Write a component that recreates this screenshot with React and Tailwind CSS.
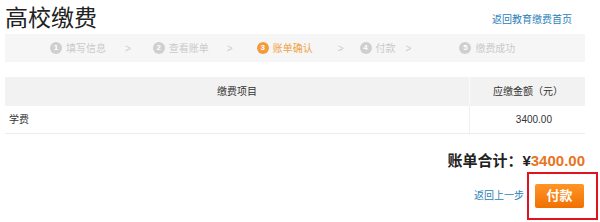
import React from "react";

const font = { fontFamily: '"Liberation Sans", "Noto Sans CJK SC", sans-serif' };

const steps = [
  { n: 1, label: "填写信息", sep: "ml-[19px] mr-[22px]" },
  { n: 2, label: "查看账单", sep: "ml-[18px] mr-[24px]" },
  { n: 3, label: "账单确认", sep: "ml-[25px] mr-[16px]", active: true },
  { n: 4, label: "付款", sep: "ml-[10px] mr-[48px]" },
  { n: 5, label: "缴费成功" },
];

function Step({ step }) {
  const color = step.active ? "text-[#f0a444]" : "text-[#cacaca]";
  const dot = step.active ? "bg-[#f39b3c]" : "bg-[#cfcfcf]";
  return (
    <div className={`flex items-center gap-[4px] text-[10px] ${color}`}>
      <span
        className={`flex h-[12px] w-[12px] items-center justify-center rounded-full text-[8px] font-bold leading-none text-white ${dot}`}
      >
        {step.n}
      </span>
      <span>{step.label}</span>
    </div>
  );
}

export default function App() {
  return (
    <div className="h-[222px] w-[600px] bg-white pl-[5px] text-[#333]" style={font}>
      <div className="w-[580px]">
        {/* Title row */}
        <div className="flex h-[34px] items-start justify-between">
          <h1 className="mt-[6px] text-[23px] leading-[24px] text-[#222]">高校缴费</h1>
          <a className="mr-[13px] mt-[13px] text-[10px] leading-[14px] text-[#2b82b9]">返回教育缴费首页</a>
        </div>

        {/* Steps */}
        <div className="flex h-[28px] items-center bg-[#f6f6f6] pl-[45px]">
          {steps.map((s) => (
            <div key={s.n} className="flex items-center">
              <Step step={s} />
              {s.sep && <span className={`text-[10px] text-[#cccccc] ${s.sep}`}>&gt;</span>}
            </div>
          ))}
        </div>

        {/* Table */}
        <div className="mt-[15px] border-b border-[#ececec] text-[10px] text-[#333]">
          <div className="flex h-[29px] items-center bg-[#f2f2f2]">
            <div className="flex-1 text-center">缴费项目</div>
            <div className="flex h-full w-[116px] items-center justify-end border-l border-[#fafafa] pr-[22px]">
              应缴金额（元）
            </div>
          </div>
          <div className="flex h-[27px] items-center">
            <div className="flex-1 pl-[4px]">学费</div>
            <div className="flex h-full w-[116px] items-center justify-end border-l border-[#f0f0f0] pr-[33px]">
              3400.00
            </div>
          </div>
        </div>

        {/* Total */}
        <div className="mt-[18px] flex h-[18px] items-center justify-end text-[15px] font-bold leading-[18px] text-[#222]">
          <span>账单合计：</span>
          <span>¥</span>
          <span className="text-[#e8741f]">3400.00</span>
        </div>

        {/* Actions */}
        <div className="mt-[2px] flex items-center justify-end">
          <a className="mr-[3px] text-[10px] leading-[14px] text-[#2b82b9]">返回上一步</a>
          <div className="mr-[-13px] flex h-[48px] w-[71px] items-center border-2 border-[#e0141e] pl-[6px]">
            <button className="h-[24px] w-[49px] rounded-[2px] bg-gradient-to-b from-[#ff9524] to-[#f07000] text-[13px] font-bold text-white">
              付款
            </button>
          </div>
        </div>
      </div>
    </div>
  );
}
